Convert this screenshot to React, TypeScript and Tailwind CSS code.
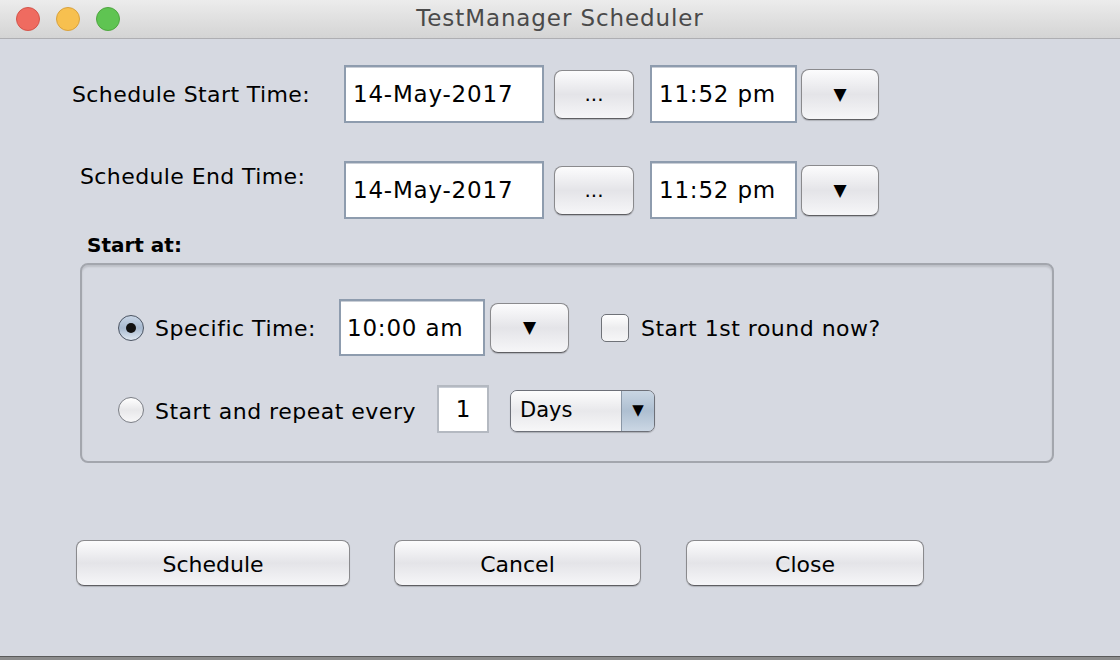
import React from 'react';

const font = { fontFamily: '"DejaVu Sans", "Liberation Sans", sans-serif' };

const TextBox = ({ value, className = '' }: { value: string; className?: string }) => (
  <div
    className={`flex items-center border-2 border-[#8e9cae] bg-white pt-[1px] shadow-[inset_0_1px_0_#c9ced6] text-[23px] tracking-[0.8px] text-black ${className}`}
  >
    {value}
  </div>
);

const AquaButton = ({ children, className = '' }: { children: React.ReactNode; className?: string }) => (
  <div
    className={`flex items-center justify-center rounded-[8px] border border-[#8a8a8d] border-b-[#5f5f63] bg-gradient-to-b from-[#fcfcfd] via-[#e4e4e8] to-[#f6f6f8] shadow-[0_1px_1px_rgba(0,0,0,0.18)] text-black ${className}`}
  >
    {children}
  </div>
);

const Arrow = () => <span className="text-[17px] leading-none">▼</span>;

const Radio = ({ checked }: { checked?: boolean }) =>
  checked ? (
    <div className="flex h-[26px] w-[26px] items-center justify-center rounded-full border border-[#4b5462] bg-gradient-to-b from-[#c9d6e6] via-[#a7b9cf] to-[#dfe8f2]">
      <div className="h-[10px] w-[10px] rounded-full bg-[#111]" />
    </div>
  ) : (
    <div className="h-[26px] w-[26px] rounded-full border border-[#7c7f86] bg-gradient-to-b from-[#ffffff] via-[#e8e8ea] to-[#f7f7f8]" />
  );

export default function App() {
  return (
    <div className="flex h-[660px] w-[1120px] flex-col overflow-hidden bg-[#d6d9e1]" style={font}>
      {/* title bar */}
      <div className="relative flex h-[39px] shrink-0 items-center border-b border-[#aeaeb2] bg-gradient-to-b from-[#ececec] to-[#d4d4d4]">
        <div className="flex gap-[16px] pl-[16px]">
          <div className="h-[24px] w-[24px] rounded-full border border-[#d4544a] bg-[#ef6b60]" />
          <div className="h-[24px] w-[24px] rounded-full border border-[#d9a23d] bg-[#f7c04f]" />
          <div className="h-[24px] w-[24px] rounded-full border border-[#4fa640] bg-[#5fc452]" />
        </div>
        <div className="absolute inset-0 flex items-center justify-center pb-[2px] text-[23px] tracking-[0.9px] text-[#4a4a4a]">
          TestManager Scheduler
        </div>
      </div>

      <div className="flex flex-1 flex-col">
        {/* start time row */}
        <div className="mt-[26px] flex h-[58px] items-center">
          <div className="w-[344px] pl-[72px] text-[22px] tracking-[0.4px] text-black">Schedule Start Time:</div>
          <TextBox value="14-May-2017" className="h-[58px] w-[200px] pl-[7px]" />
          <AquaButton className="ml-[10px] h-[49px] w-[80px] text-[20px]">...</AquaButton>
          <TextBox value="11:52 pm" className="ml-[16px] h-[58px] w-[147px] pl-[7px]" />
          <AquaButton className="ml-[4px] h-[51px] w-[78px]">
            <Arrow />
          </AquaButton>
        </div>

        {/* end time row */}
        <div className="mt-[38px] flex h-[58px] items-center">
          <div className="-mt-[1px] w-[344px] self-start pl-[80px] text-[22px] tracking-[0.4px] text-black">Schedule End Time:</div>
          <TextBox value="14-May-2017" className="h-[58px] w-[200px] pl-[7px]" />
          <AquaButton className="ml-[10px] h-[49px] w-[80px] text-[20px]">...</AquaButton>
          <TextBox value="11:52 pm" className="ml-[16px] h-[58px] w-[147px] pl-[7px]" />
          <AquaButton className="ml-[4px] h-[51px] w-[78px]">
            <Arrow />
          </AquaButton>
        </div>

        <div className="ml-[87px] mt-[13px] text-[20px] font-bold leading-[26px] text-black">Start at:</div>

        {/* group box */}
        <div className="ml-[80px] mt-[5px] flex h-[200px] w-[974px] flex-col rounded-[8px] border-2 border-[#a3a6ad] shadow-[inset_0_2px_2px_rgba(0,0,0,0.12)]">
          <div className="mt-[34px] flex h-[57px] items-center">
            <div className="ml-[36px]">
              <Radio checked />
            </div>
            <div className="ml-[11px] w-[184px] pt-[2px] text-[22px] tracking-[0.5px] text-black">Specific Time:</div>
            <TextBox value="10:00 am" className="h-[57px] w-[146px] pl-[6px]" />
            <AquaButton className="ml-[5px] h-[50px] w-[79px]">
              <Arrow />
            </AquaButton>
            <div className="ml-[32px] h-[28px] w-[28px] rounded-[5px] border border-[#6f7278] bg-gradient-to-b from-[#ffffff] via-[#ececee] to-[#f6f6f7]" />
            <div className="ml-[12px] pt-[2px] text-[22px] tracking-[0.5px] text-black">Start 1st round now?</div>
          </div>

          <div className="mt-[29px] flex h-[48px] items-center">
            <div className="ml-[36px] pt-[2px]">
              <Radio />
            </div>
            <div className="ml-[11px] w-[282px] pt-[4px] text-[22px] tracking-[0.5px] text-black">Start and repeat every</div>
            <TextBox value="1" className="h-[48px] w-[52px] justify-center border-[#b4b9c1] tracking-normal" />
            <div className="ml-[21px] mt-[3px] flex h-[42px] w-[145px] overflow-hidden rounded-[7px] border border-[#6d7078] shadow-[0_1px_1px_rgba(0,0,0,0.2)]">
              <div className="flex flex-1 items-center bg-gradient-to-b from-[#fdfdfd] via-[#e8e8eb] to-[#f7f7f8] pl-[9px] text-[21px] text-black">
                Days
              </div>
              <div className="flex w-[33px] items-center justify-center border-l border-[#8a97a6] bg-gradient-to-b from-[#c9d6e3] via-[#aebfd1] to-[#cbd7e4]">
                <span className="text-[15px] leading-none">▼</span>
              </div>
            </div>
          </div>
        </div>

        {/* action buttons */}
        <div className="mt-[77px] flex h-[46px]">
          <AquaButton className="ml-[76px] h-[46px] w-[274px] pt-[3px] text-[22px]">Schedule</AquaButton>
          <AquaButton className="ml-[44px] h-[46px] w-[247px] pt-[3px] text-[22px]">Cancel</AquaButton>
          <AquaButton className="ml-[45px] h-[46px] w-[238px] pt-[3px] text-[22px]">Close</AquaButton>
        </div>
      </div>

      <div className="h-[4px] shrink-0 border-t border-[#5a5a5a] bg-[#8c8c8c]" />
    </div>
  );
}
